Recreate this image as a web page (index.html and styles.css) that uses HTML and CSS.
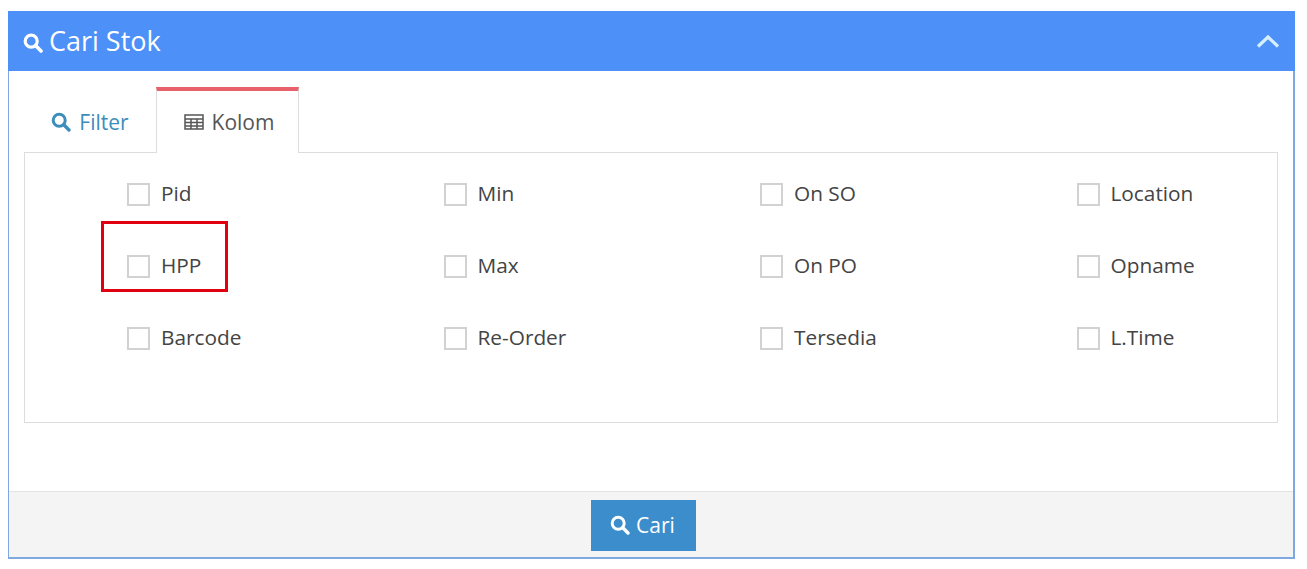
FILE: index.html
```html
<!DOCTYPE html>
<html lang="id">
<head>
<meta charset="UTF-8">
<title>Cari Stok</title>
<link rel="stylesheet" href="styles.css">
</head>
<body>
<div class="panel">
    <div class="panel-header">
        <h3 class="panel-title">
            <svg class="icon icon-title" viewBox="0 0 20 20"><circle cx="8.2" cy="8.2" r="6" fill="none" stroke="currentColor" stroke-width="3.2"/><path d="M12.8 12.8L18 18" stroke="currentColor" stroke-width="3.6" stroke-linecap="round"/></svg>
            Cari Stok
        </h3>
        <svg class="chevron" viewBox="0 0 24 14"><path d="M2 12.5L12 3l10 9.500" fill="none" stroke="currentColor" stroke-width="3.200"/></svg>
    </div>
    <div class="panel-body">
        <ul class="tabs">
            <li class="tab">
                <svg class="icon" viewBox="0 0 20 20"><circle cx="8.2" cy="8.2" r="6" fill="none" stroke="currentColor" stroke-width="3"/><path d="M12.800 12.800L18 18" stroke="currentColor" stroke-width="3.400" stroke-linecap="round"/></svg>
                Filter
            </li>
            <li class="tab tab-active">
                <svg class="icon" viewBox="0 0 20 17"><path d="M1 1.500h18v14H1zM1 5.500h18M1 9h18M1 12.500h18M7 5.500v10M13 5.500v10" fill="none" stroke="currentColor" stroke-width="1.500"/></svg>
                Kolom
            </li>
        </ul>
        <div class="tab-content">
            <div class="kolom-grid">
                <label class="kolom"><span class="cek"></span><span class="nama">Pid</span></label>
                <label class="kolom"><span class="cek"></span><span class="nama">Min</span></label>
                <label class="kolom"><span class="cek"></span><span class="nama">On SO</span></label>
                <label class="kolom"><span class="cek"></span><span class="nama">Location</span></label>
                <label class="kolom"><span class="cek"></span><span class="nama">HPP</span><span class="penanda"></span></label>
                <label class="kolom"><span class="cek"></span><span class="nama">Max</span></label>
                <label class="kolom"><span class="cek"></span><span class="nama">On PO</span></label>
                <label class="kolom"><span class="cek"></span><span class="nama">Opname</span></label>
                <label class="kolom"><span class="cek"></span><span class="nama">Barcode</span></label>
                <label class="kolom"><span class="cek"></span><span class="nama">Re-Order</span></label>
                <label class="kolom"><span class="cek"></span><span class="nama">Tersedia</span></label>
                <label class="kolom"><span class="cek"></span><span class="nama">L.Time</span></label>
            </div>
        </div>
    </div>
    <div class="panel-footer">
        <button class="btn-cari" type="button">
            <svg class="icon" viewBox="0 0 20 20"><circle cx="8.200" cy="8.200" r="6" fill="none" stroke="currentColor" stroke-width="3"/><path d="M12.800 12.800L18 18" stroke="currentColor" stroke-width="3.400" stroke-linecap="round"/></svg>
            Cari
        </button>
    </div>
</div>
</body>
</html>
```
FILE: styles.css
```css
html, body {
    height: 100%;
}
body {
    margin: 0;
    padding: 11px 12px 0 8px;
    box-sizing: border-box;
    background: #fff;
    font-family: "Open Sans", sans-serif;
    color: #444;
    overflow: hidden;
}
.panel {
    height: 548px;
    border: 2px solid #7fa8e0;
    border-top: 0;
    border-left-width: 1px;
    box-sizing: border-box;
    display: flex;
    flex-direction: column;
}
.panel-header {
    height: 60px;
    margin: 0 -2px 0 -1px;
    background: #4d90f7;
    color: #fff;
    display: flex;
    align-items: center;
    justify-content: space-between;
    padding: 0 15px 0 15px;
    flex-shrink: 0;
}
.panel-title {
    margin: -2px 0 0;
    font-size: 27px;
    font-weight: 400;
    display: flex;
    align-items: center;
    gap: 6px;
}
.icon {
    width: 20px;
    height: 20px;
    flex-shrink: 0;
}
.icon-title {
    margin-top: 5px;
}
.chevron {
    width: 24px;
    height: 14px;
    color: #d5efff;
}
.panel-body {
    flex: 1;
    padding: 16px 15px 0;
}
.tabs {
    display: flex;
    list-style: none;
    margin: 0;
    padding: 0;
    height: 65px;
}
.tab {
    width: 132px;
    box-sizing: border-box;
    display: flex;
    align-items: center;
    justify-content: center;
    gap: 8px;
    font-size: 21px;
    color: #3c8dbc;
    padding-top: 5px;
}
.tab-active {
    width: 143px;
    background: #fff;
    color: #555;
    border-top: 4px solid #e8606a;
    border-left: 1px solid #ddd;
    border-right: 1px solid #ddd;
    padding: 0 0 0 3px;
    height: 66px;
    position: relative;
    z-index: 1;
}
.tab-content {
    height: 271px;
    box-sizing: border-box;
    border: 1px solid #ddd;
    padding-left: 102px;
}
.kolom-grid {
    display: grid;
    grid-template-columns: repeat(3, 316.5px) 1fr;
    grid-auto-rows: 72px;
    padding-top: 5px;
}
.kolom {
    display: flex;
    align-items: center;
    gap: 11px;
    font-size: 20.8px;
    color: #444;
    position: relative;
}
.nama {
    line-height: 28px;
    margin-bottom: 2px;
}
.cek {
    width: 23px;
    height: 23px;
    box-sizing: border-box;
    border: 2px solid #d2d2d2;
    background: #fff;
}
.penanda {
    position: absolute;
    left: -26px;
    top: -9px;
    width: 127px;
    height: 71px;
    box-sizing: border-box;
    border: 3px solid #e0000f;
}
.panel-footer {
    height: 66px;
    box-sizing: border-box;
    background: #f4f4f4;
    border-top: 1px solid #e4e4e4;
    display: flex;
    justify-content: center;
    padding: 8px 15px 0 0;
    flex-shrink: 0;
}
.btn-cari {
    width: 105px;
    height: 51px;
    border: 0;
    background: #3c8dcb;
    color: #fff;
    font-family: inherit;
    font-size: 21px;
    display: flex;
    align-items: center;
    justify-content: center;
    gap: 6px;
    padding: 0 2px 2px 0;
}
```
